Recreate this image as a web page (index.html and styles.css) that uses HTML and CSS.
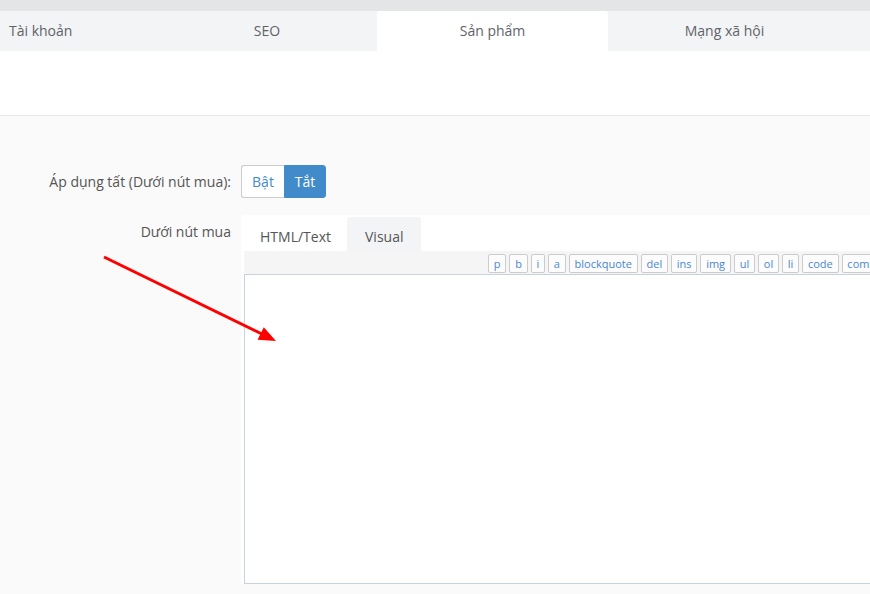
FILE: index.html
```html
<!DOCTYPE html>
<html lang="vi">
<head>
<meta charset="utf-8">
<title>Cài đặt</title>
<link rel="stylesheet" href="styles.css">
</head>
<body>
<div class="page">
  <div class="topbar"></div>
  <nav class="tabs">
    <div class="tab tab-first">Tài khoản</div>
    <div class="tab tab-seo">SEO</div>
    <div class="tab tab-active">Sản phẩm</div>
    <div class="tab tab-social">Mạng xã hội</div>
  </nav>
  <div class="panel-head"></div>
  <div class="content">
    <div class="form-row row-toggle">
      <label class="form-label">Áp dụng tất (Dưới nút mua):</label>
      <div class="btn-group">
        <button class="btn btn-off">Bật</button>
        <button class="btn btn-on">Tắt</button>
      </div>
    </div>
    <div class="form-row row-editor">
      <label class="form-label label-top">Dưới nút mua</label>
      <div class="editor">
        <div class="editor-tabs">
          <div class="etab etab-html">HTML/Text</div>
          <div class="etab etab-visual">Visual</div>
        </div>
        <div class="toolbar">
          <button class="qt">p</button>
          <button class="qt">b</button>
          <button class="qt">i</button>
          <button class="qt">a</button>
          <button class="qt">blockquote</button>
          <button class="qt">del</button>
          <button class="qt">ins</button>
          <button class="qt">img</button>
          <button class="qt">ul</button>
          <button class="qt">ol</button>
          <button class="qt">li</button>
          <button class="qt">code</button>
          <button class="qt">comment</button>
          <button class="qt">close tags</button>
        </div>
        <div class="textarea"></div>
      </div>
    </div>
  </div>
  <svg class="arrow" width="870" height="594" viewBox="0 0 870 594">
    <line x1="104" y1="257" x2="262" y2="334" stroke="#ff0000" stroke-width="3"/>
    <polygon points="276,341 257.6,339.8 263.8,327.2" fill="#ff0000"/>
  </svg>
</div>
</body>
</html>
```
FILE: styles.css
```css
html, body {
  margin: 0;
  padding: 0;
}
body {
  width: 870px;
  height: 594px;
  overflow: hidden;
  font-family: "Open Sans", "Noto Sans", sans-serif;
  font-size: 14px;
  color: #555;
  background: #fafafa;
}
.page {
  position: relative;
  width: 870px;
  height: 594px;
  overflow: hidden;
}
.topbar {
  height: 11px;
  background: #e4e5e7;
}
.tabs {
  display: flex;
  height: 40px;
  background: #f3f4f6;
}
.tab {
  display: flex;
  align-items: center;
  justify-content: center;
  box-sizing: border-box;
  padding-bottom: 2px;
  color: #5f6368;
  flex: none;
}
.tab-first {
  width: 157px;
  justify-content: flex-start;
  padding-left: 9px;
}
.tab-seo {
  width: 220px;
}
.tab-active {
  width: 231px;
  background: #fff;
  border-radius: 3px 3px 0 0;
}
.tab-social {
  width: 233px;
}
.panel-head {
  height: 64px;
  background: #fff;
  border-bottom: 1px solid #e6e6e6;
}
.content {
  padding-top: 49px;
}
.form-row {
  display: flex;
}
.row-toggle {
  align-items: center;
}
.row-editor {
  margin-top: 17px;
  align-items: flex-start;
}
.form-label {
  width: 231px;
  flex: none;
  box-sizing: border-box;
  text-align: right;
  margin-right: 10px;
  color: #555;
}
.label-top {
  padding-top: 7px;
}
.btn-group {
  display: flex;
}
.btn {
  font-family: inherit;
  font-size: 14px;
  height: 33px;
  margin: 0;
  padding: 0 9px;
  border: 1px solid #ccc;
  cursor: pointer;
}
.btn-off {
  width: 43px;
  background: #fff;
  color: #428bca;
  border-radius: 3px 0 0 3px;
  border-right: none;
}
.btn-on {
  width: 42px;
  background: #428bca;
  border-color: #428bca;
  color: #fff;
  border-radius: 0 3px 3px 0;
}
.editor {
  width: 700px;
  flex: none;
  background: #fff;
  border-radius: 3px 0 0 0;
  padding: 2px 0 0 3px;
}
.editor-tabs {
  display: flex;
  height: 34px;
}
.etab {
  display: flex;
  align-items: center;
  box-sizing: border-box;
  padding-top: 5px;
  color: #555;
}
.etab-html {
  width: 103px;
  padding-left: 16px;
}
.etab-visual {
  width: 74px;
  padding-left: 18px;
  background: #f3f4f6;
  border-radius: 3px 3px 0 0;
}
.toolbar {
  display: flex;
  gap: 3px;
  height: 23px;
  box-sizing: border-box;
  padding: 3px 0 0 244px;
  background: #f5f5f5;
  white-space: nowrap;
}
.qt {
  flex: none;
  height: 19px;
  margin: 0;
  padding: 0 4.8px;
  font-family: inherit;
  font-size: 11px;
  line-height: 17px;
  color: #4a87d0;
  background: #fcfcfc;
  border: 1px solid #ccc;
  border-radius: 2px;
}
.textarea {
  height: 308px;
  background: #fff;
  border: 1px solid #c9d3dc;
  border-right: none;
}
.arrow {
  position: absolute;
  left: 0;
  top: 0;
  pointer-events: none;
}
```
